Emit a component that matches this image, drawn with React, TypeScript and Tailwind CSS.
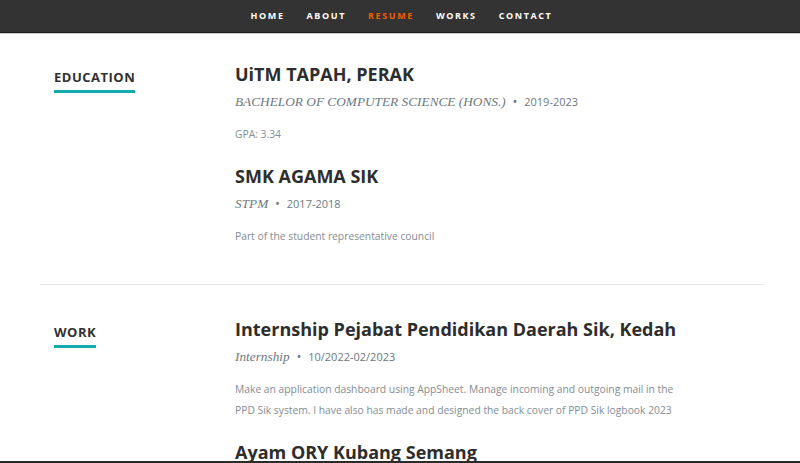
import React from "react";

const navItems = ["Home", "About", "Resume", "Works", "Contact"];

const education = [
  {
    school: "UiTM TAPAH, PERAK",
    info: "BACHELOR OF COMPUTER SCIENCE (HONS.)",
    date: "2019-2023",
    desc: "GPA: 3.34",
  },
  {
    school: "SMK AGAMA SIK",
    info: "STPM",
    date: "2017-2018",
    desc: "Part of the student representative council",
  },
];

const work = [
  {
    company: "Internship Pejabat Pendidikan Daerah Sik, Kedah",
    title: "Internship",
    date: "10/2022-02/2023",
    desc: "Make an application dashboard using AppSheet. Manage incoming and outgoing mail in the PPD Sik system. I have also has made and designed the back cover of PPD Sik logbook 2023",
  },
  {
    company: "Ayam ORY Kubang Semang",
    title: "Part Time",
    date: "2023",
    desc: "",
  },
];

const sans = "font-['Open_Sans',sans-serif]";
const serif = "font-['Liberation_Serif',serif]";

const Entry = ({
  heading,
  info,
  date,
  desc,
}: {
  heading: string;
  info: string;
  date: string;
  desc: string;
}) => (
  <div className="mb-[17px]">
    <h3 className={`${sans} text-[18px] leading-[28px] font-bold text-[#2d2d2d]`}>
      {heading}
    </h3>
    <p className="mt-[2px] leading-[24px] text-[#6e7881] flex items-center">
      <em className={`${serif} text-[13.3px]`}>{info}</em>
      <span className="mx-[7px] text-[12px]">&bull;</span>
      <span className={`${sans} text-[11px]`}>{date}</span>
    </p>
    {desc && (
      <p
        className={`${sans} mt-[10px] text-[10.3px] leading-[21px] text-[#838c95] max-w-[452px]`}
      >
        {desc}
      </p>
    )}
  </div>
);

const Label = ({ children }: { children: string }) => (
  <div className="w-[195px] shrink-0 pl-[14px] pt-[4px]">
    <h1
      className={`${sans} inline-block text-[13px] leading-[20px] font-bold tracking-[0.5px] text-[#313131] uppercase border-b-[3px] border-[#11abb0] pb-[3px]`}
    >
      {children}
    </h1>
  </div>
);

export default function App() {
  return (
    <div className="w-[800px] h-[463px] bg-white flex flex-col overflow-hidden border-b-2 border-[#2b2b2b]">
      <nav className="h-[33px] shrink-0 bg-[#333] border-b border-[#1f1f1f] shadow-[0_1px_0_#c8c8c8] flex justify-center items-center relative z-10">
        <ul className="flex gap-[22px] pl-[3px]">
          {navItems.map((item) => (
            <li
              key={item}
              className={`${sans} text-[9px] font-bold uppercase tracking-[1.6px] ${
                item === "Resume" ? "text-[#f06000]" : "text-white"
              }`}
            >
              {item}
            </li>
          ))}
        </ul>
      </nav>
      <main className="flex-1 overflow-hidden">
        <div className="ml-[40px] mr-[36px]">
          <section className="flex pt-[27px] pb-[20px] border-b border-[#e8e8e8]">
            <Label>Education</Label>
            <div className="flex-1">
              {education.map((e) => (
                <Entry
                  key={e.school}
                  heading={e.school}
                  info={e.info}
                  date={e.date}
                  desc={e.desc}
                />
              ))}
            </div>
          </section>
          <section className="flex pt-[30px]">
            <Label>Work</Label>
            <div className="flex-1">
              {work.map((w) => (
                <Entry
                  key={w.company}
                  heading={w.company}
                  info={w.title}
                  date={w.date}
                  desc={w.desc}
                />
              ))}
            </div>
          </section>
        </div>
      </main>
    </div>
  );
}
